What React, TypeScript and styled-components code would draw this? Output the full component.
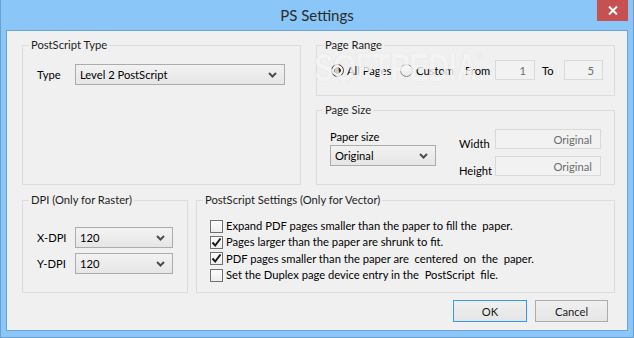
import styled, { createGlobalStyle } from "styled-components";

type Width = { w: number };
type Checked = { checked?: boolean };

const GlobalStyle = createGlobalStyle`
    html, body {
        margin: 0;
        padding: 0;
        width: 634px;
        height: 338px;
        overflow: hidden;
        background: #8ac6f7;
    }
    * { box-sizing: border-box; }
`;

function Chevron() {
    return (
        <svg width="9" height="6" viewBox="0 0 9 6">
            <path d="M1 1 L4.5 4.5 L8 1" fill="none" stroke="#4d4d4d" strokeWidth="2" />
        </svg>
    );
}

function Combo({ value, w }: { value: string; w: number }) {
    return (
        <ComboBox w={w}>
            <span>{value}</span>
            <Chevron />
        </ComboBox>
    );
}

function Radio({ label, checked, w }: { label: string; checked?: boolean; w: number }) {
    return (
        <RadioLabel w={w}>
            <RadioCircle checked={checked} />
            {label}
        </RadioLabel>
    );
}

function Check({ label, checked }: { label: string; checked?: boolean }) {
    return (
        <CheckRow>
            <CheckBox>
                {checked && (
                    <svg width="11" height="11" viewBox="0 0 11 11">
                        <path d="M1.5 5.5 L4.2 8.5 L9.5 1.5" fill="none" stroke="#1a1a1a" strokeWidth="2" />
                    </svg>
                )}
            </CheckBox>
            <span>{label}</span>
        </CheckRow>
    );
}

export default function App() {
    return (
        <Window>
            <GlobalStyle />
            <TitleBar>
                <span />
                <Title>PS Settings</Title>
                <CloseButton>
                    <svg width="10" height="9" viewBox="0 0 10 9">
                        <path d="M1 0.5 L9 8.5 M9 0.5 L1 8.5" stroke="#fff" strokeWidth="2" />
                    </svg>
                </CloseButton>
            </TitleBar>
            <Panel>
                <TopRow>
                    <Group h={148}>
                        <Legend>PostScript Type</Legend>
                        <TypeBody>
                            <FieldLabel w={38}>Type</FieldLabel>
                            <Combo value="Level 2 PostScript" w={210} />
                        </TypeBody>
                    </Group>
                    <RightColumn>
                        <Group h={59}>
                            <Legend>Page Range</Legend>
                            <RangeBody>
                                <Radio label="All Pages" checked w={69} />
                                <Radio label="Custom" w={62} />
                                <RangeText w={30} gap={3}>From</RangeText>
                                <TextBox w={40}>1</TextBox>
                                <RangeText w={22} gap={7}>To</RangeText>
                                <TextBox w={39}>5</TextBox>
                            </RangeBody>
                        </Group>
                        <Group h={83}>
                            <Legend>Page Size</Legend>
                            <SizeBody>
                                <PaperColumn>
                                    <span>Paper size</span>
                                    <Combo value="Original" w={106} />
                                </PaperColumn>
                                <DimColumn>
                                    <DimRow>
                                        <DimLabel>Width</DimLabel>
                                        <TextBox w={106}>Original</TextBox>
                                    </DimRow>
                                    <DimRow>
                                        <DimLabel>Height</DimLabel>
                                        <TextBox w={106}>Original</TextBox>
                                    </DimRow>
                                </DimColumn>
                            </SizeBody>
                        </Group>
                    </RightColumn>
                </TopRow>
                <BottomRow>
                    <Group h={101}>
                        <Legend>DPI (Only for Raster)</Legend>
                        <DpiBody>
                            <DpiRow>
                                <FieldLabel w={38}>X-DPI</FieldLabel>
                                <Combo value="120" w={98} />
                            </DpiRow>
                            <DpiRow>
                                <FieldLabel w={38}>Y-DPI</FieldLabel>
                                <Combo value="120" w={98} />
                            </DpiRow>
                        </DpiBody>
                    </Group>
                    <Group h={101}>
                        <Legend>PostScript Settings (Only for Vector)</Legend>
                        <CheckList>
                            <Check label="Expand PDF pages smaller than the paper to fill the  paper." />
                            <Check label="Pages larger than the paper are shrunk to fit." checked />
                            <Check label="PDF pages smaller than the paper are  centered  on  the  paper." checked />
                            <Check label="Set the Duplex page device entry in the  PostScript  file." />
                        </CheckList>
                    </Group>
                </BottomRow>
                <ButtonRow>
                    <Button w={74} primary>OK</Button>
                    <Button w={73}>Cancel</Button>
                </ButtonRow>
            </Panel>
            <Watermark>SOFTPEDIA<sup>®</sup></Watermark>
        </Window>
    );
}

const Window = styled.div`
    position: relative;
    width: 634px;
    height: 338px;
    display: flex;
    flex-direction: column;
    background: #8ac6f7;
    border: 1px solid #6a9fd2;
    border-top: none;
    font-family: Lato, "Noto Sans", sans-serif;
    font-size: 11.2px;
    color: #000;
`;

const TitleBar = styled.div`
    height: 30px;
    display: grid;
    grid-template-columns: 1fr auto 1fr;
    align-items: start;
`;

const Title = styled.span`
    font-size: 15px;
    line-height: 30px;
    color: #2b2b2b;
`;

const CloseButton = styled.div`
    justify-self: end;
    margin-right: 5px;
    width: 31px;
    height: 21px;
    background: #c75050;
    display: flex;
    align-items: center;
    justify-content: center;
`;

const Panel = styled.div`
    margin: 0 5px;
    height: 301px;
    background: #f0f0f0;
    border: 1px solid #6fa3d6;
    padding: 6px 10px 8px 15px;
    display: flex;
    flex-direction: column;
`;

const TopRow = styled.div`
    display: grid;
    grid-template-columns: 279px 299px;
    column-gap: 15px;
`;

const RightColumn = styled.div`
    display: flex;
    flex-direction: column;
    row-gap: 6px;
`;

const BottomRow = styled.div`
    margin-top: 7px;
    display: grid;
    grid-template-columns: 166px 419px;
    column-gap: 8px;
`;

const Group = styled.fieldset<{ h: number }>`
    margin: 0;
    min-width: 0;
    height: ${p => p.h}px;
    padding: 0 0 0 6px;
    border: 1px solid #dcdcdc;
`;

const Legend = styled.legend`
    padding: 0 2px;
    line-height: 16px;
    color: #1e1e1e;
`;

const FieldLabel = styled.span<Width>`
    width: ${p => p.w}px;
    flex: none;
`;

const ComboBox = styled.div<Width>`
    width: ${p => p.w}px;
    height: 21px;
    flex: none;
    display: flex;
    align-items: center;
    justify-content: space-between;
    padding: 0 7px 0 4px;
    border: 1px solid #acacac;
    background: linear-gradient(#f2f2f2, #e6e6e6);
`;

const TextBox = styled.div<Width>`
    width: ${p => p.w}px;
    height: 20px;
    flex: none;
    display: flex;
    align-items: center;
    justify-content: flex-end;
    padding-right: 8px;
    border: 1px solid #d9d9d9;
    background: #f2f2f2;
    color: #6d6d6d;
`;

const TypeBody = styled.div`
    display: flex;
    align-items: center;
    padding: 11px 0 0 8px;
`;

const RangeBody = styled.div`
    display: flex;
    align-items: center;
    padding: 7px 0 0 8px;
    white-space: nowrap;
`;

const RadioLabel = styled.label<Width>`
    width: ${p => p.w}px;
    display: flex;
    align-items: center;
    flex: none;
    column-gap: 3px;
`;

const RadioCircle = styled.span<Checked>`
    width: 13px;
    height: 13px;
    flex: none;
    border-radius: 50%;
    border: 1px solid ${p => (p.checked ? "#3c3c3c" : "#8a8a8a")};
    background: ${p =>
        p.checked
            ? "radial-gradient(circle, #1f1f1f 0 3px, #f4f4f4 3.5px)"
            : "linear-gradient(#ffffff, #e8e8e8)"};
`;

const RangeText = styled.span<Width & { gap: number }>`
    width: ${p => p.w}px;
    margin-left: ${p => p.gap}px;
    flex: none;
`;

const SizeBody = styled.div`
    display: flex;
    padding: 11px 0 0 7px;
`;

const PaperColumn = styled.div`
    width: 129px;
    display: flex;
    flex-direction: column;
    line-height: 16px;
`;

const DimColumn = styled.div`
    display: flex;
    flex-direction: column;
    row-gap: 4px;
`;

const DimRow = styled.div`
    display: flex;
    align-items: flex-start;
`;

const DimLabel = styled.span`
    width: 36px;
    padding-top: 7px;
    line-height: 16px;
`;

const DpiBody = styled.div`
    display: flex;
    flex-direction: column;
    row-gap: 5px;
    padding: 19px 0 0 8px;
`;

const DpiRow = styled.div`
    display: flex;
    align-items: center;
`;

const CheckList = styled.div`
    display: flex;
    flex-direction: column;
    padding: 10px 0 0 7px;
    line-height: 16.3px;
`;

const CheckRow = styled.div`
    display: flex;
    align-items: center;
    column-gap: 3px;
    white-space: pre;
`;

const CheckBox = styled.span`
    width: 13px;
    height: 13px;
    flex: none;
    border: 1px solid #707070;
    background: linear-gradient(#fbfbfb, #eeeeee);
    display: flex;
    align-items: center;
    justify-content: center;
`;

const ButtonRow = styled.div`
    margin-top: 7px;
    margin-right: 9px;
    display: flex;
    justify-content: flex-end;
    column-gap: 8px;
`;

const Button = styled.div<Width & { primary?: boolean }>`
    width: ${p => p.w}px;
    height: 22px;
    display: flex;
    align-items: center;
    justify-content: center;
    border: 1px solid ${p => (p.primary ? "#3399ff" : "#acacac")};
    background: linear-gradient(#f0f0f0, #e5e5e5);
    color: #1a1a1a;
`;

const Watermark = styled.div`
    position: absolute;
    left: 313px;
    top: 47px;
    font-family: "Liberation Sans", Arial, sans-serif;
    font-weight: 700;
    font-size: 38px;
    letter-spacing: -1px;
    transform: scaleX(0.78);
    transform-origin: left top;
    color: rgba(255, 255, 255, 0.75);
    text-shadow: 0 0 1px rgba(120, 120, 120, 0.25);
    pointer-events: none;

    sup {
        font-size: 10px;
        vertical-align: 22px;
    }
`;
